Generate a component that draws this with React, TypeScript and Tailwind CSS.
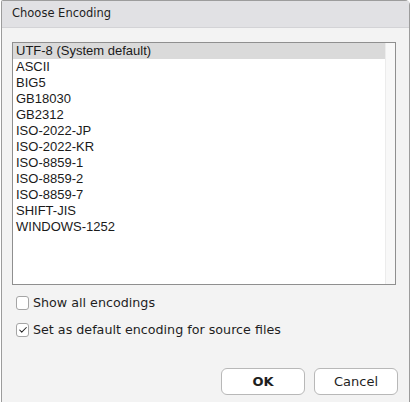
import { Check } from "lucide-react";

const encodings = [
  "UTF-8 (System default)",
  "ASCII",
  "BIG5",
  "GB18030",
  "GB2312",
  "ISO-2022-JP",
  "ISO-2022-KR",
  "ISO-8859-1",
  "ISO-8859-2",
  "ISO-8859-7",
  "SHIFT-JIS",
  "WINDOWS-1252",
];

function CheckRow({ label, checked }: { label: string; checked?: boolean }) {
  return (
    <div className="ml-[4px] flex h-[14px] items-center gap-[4px]">
      <span className="flex h-[14px] w-[13px] items-center justify-center rounded-[3px] border border-[#a5a5a5] bg-white">
        {checked && <Check size={10} strokeWidth={2.5} className="text-[#222]" />}
      </span>
      <span className="text-[12.7px] text-[#1e1e1e]">{label}</span>
    </div>
  );
}

export default function App() {
  return (
    <div className="h-[402px] w-[411px] overflow-hidden bg-white">
      <div className="ml-[1px] flex h-[402px] w-[409px] flex-col rounded-tl-[2px] rounded-tr-[5px] border-x border-t border-[#9c9c9c] bg-[#f3f3f3] font-['DejaVu_Sans',sans-serif]">
        <div className="flex h-[27px] items-center border-b border-[#d3d3d6] bg-[#e1e1e4] px-[10px] text-[11.5px] text-[#1e1e1e]">
          Choose Encoding
        </div>
        <div className="flex flex-col pl-[10px] pr-[13px] pt-[14px]">
          <div className="flex h-[243px] border border-[#8f8f8f] bg-white">
            <div className="flex-1 font-['Liberation_Sans',Arial,sans-serif] text-[13px] text-[#1a1a1a]">
              {encodings.map((e, i) => (
                <div
                  key={e}
                  className={
                    i === 0
                      ? "flex h-[16px] items-center bg-[#dadada] pl-[3px]"
                      : "flex h-[16px] items-center pl-[3px]"
                  }
                >
                  {e}
                </div>
              ))}
            </div>
            <div className="w-[10px] border-l border-[#ececec] bg-[#f8f8f8]" />
          </div>
          <div className="mt-[11px]">
            <CheckRow label="Show all encodings" />
          </div>
          <div className="mt-[13px]">
            <CheckRow label="Set as default encoding for source files" checked />
          </div>
          <div className="-mr-[2px] mt-[31px] flex justify-end gap-[9px]">
            <button className="h-[27px] w-[84px] rounded-[6px] border border-[#b8b8b8] bg-white text-[13px] font-bold text-[#1e1e1e]">
              OK
            </button>
            <button className="h-[27px] w-[84px] rounded-[6px] border border-[#b8b8b8] bg-white text-[13px] text-[#1e1e1e]">
              Cancel
            </button>
          </div>
        </div>
      </div>
    </div>
  );
}
